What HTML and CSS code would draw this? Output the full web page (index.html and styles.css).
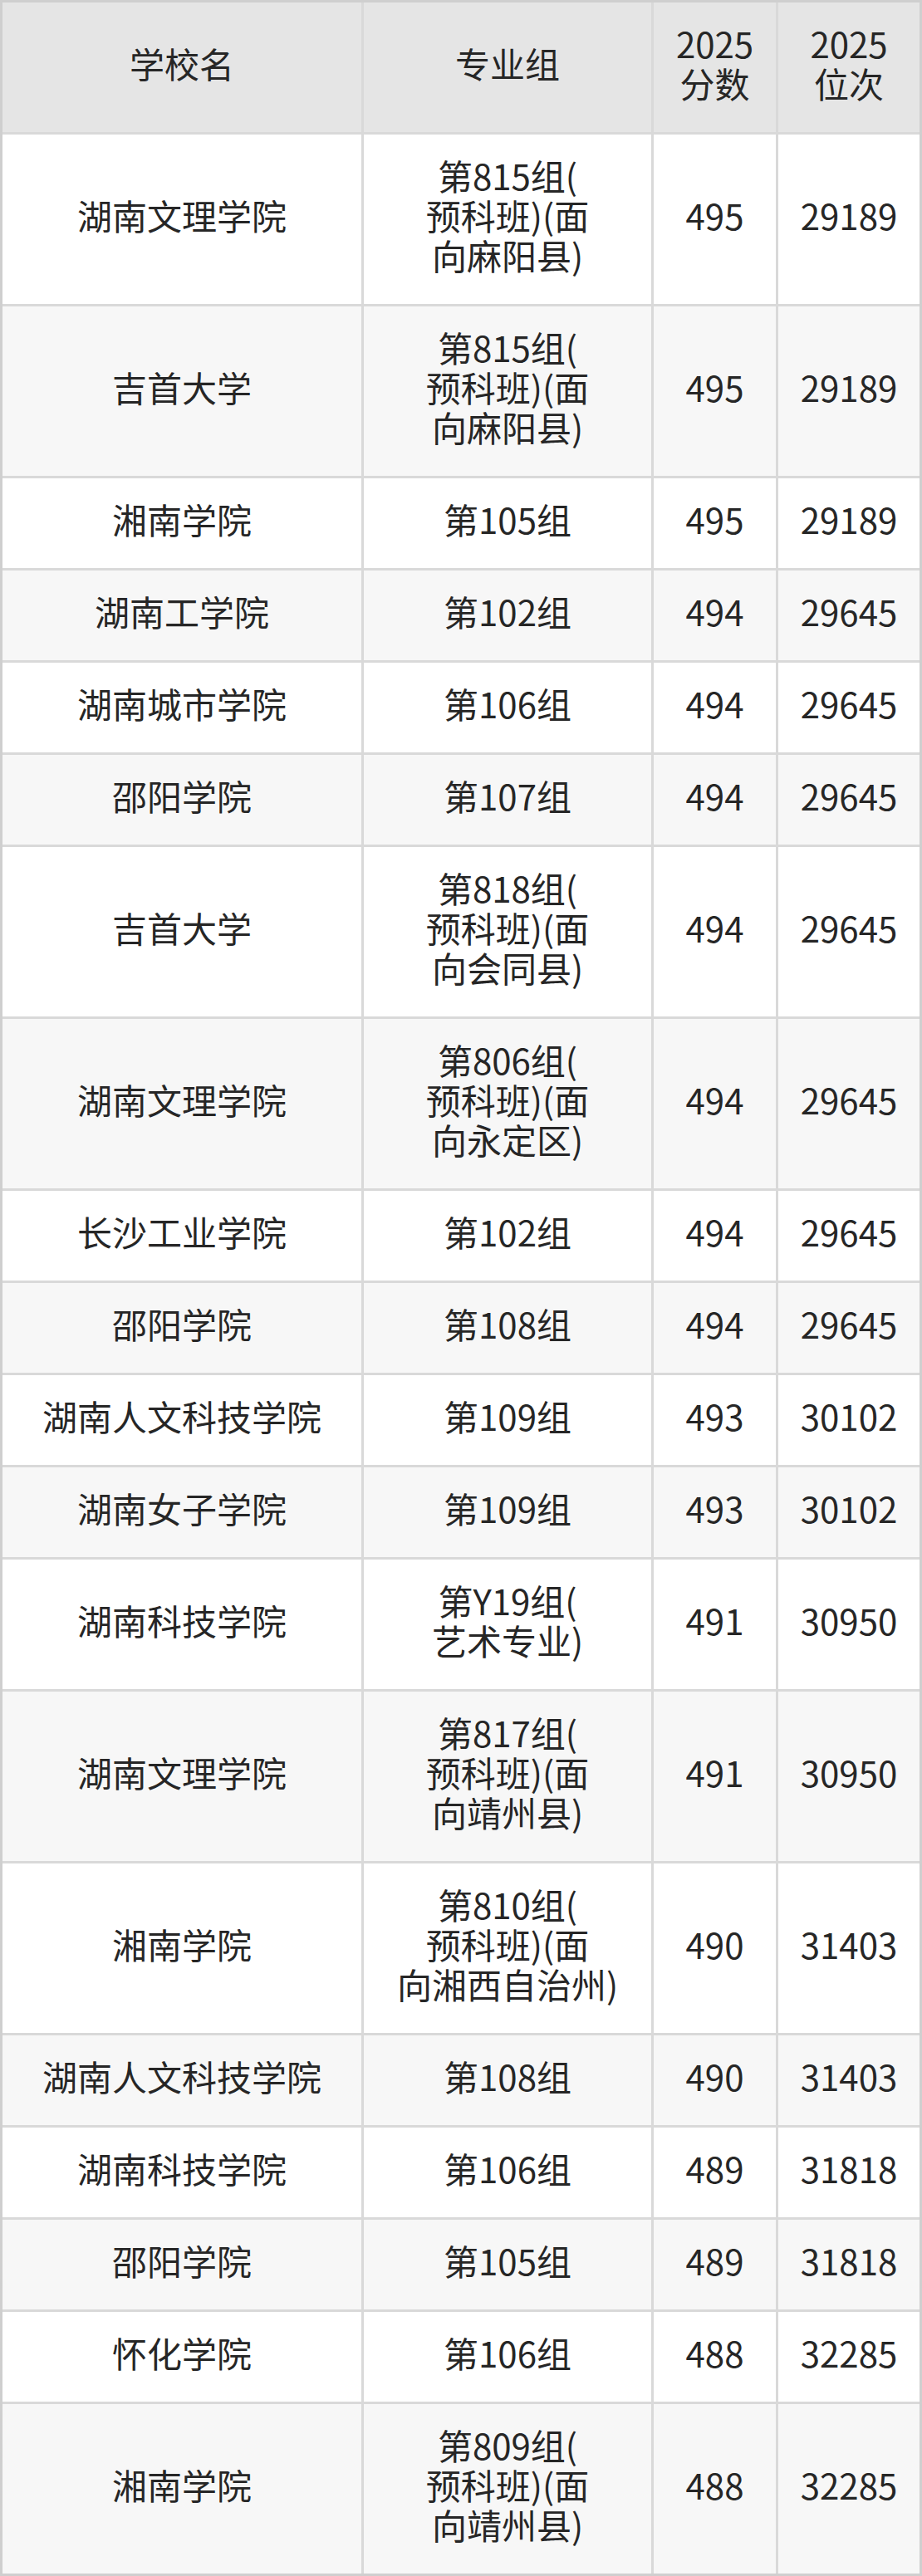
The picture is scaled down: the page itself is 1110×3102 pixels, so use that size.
FILE: index.html
```html
<!DOCTYPE html>
<html lang="zh-CN">
<head>
<meta charset="utf-8">
<title>录取分数</title>
<link rel="stylesheet" href="styles.css">
</head>
<body>
<div class="table">
  <div class="row head">
    <div class="cell">学校名</div>
    <div class="cell">专业组</div>
    <div class="cell">2025<br>分数</div>
    <div class="cell">2025<br>位次</div>
  </div>
  <div class="row">
    <div class="cell">湖南文理学院</div>
    <div class="cell">第815组(<br>预科班)(面<br>向麻阳县)</div>
    <div class="cell">495</div>
    <div class="cell">29189</div>
  </div>
  <div class="row alt">
    <div class="cell">吉首大学</div>
    <div class="cell">第815组(<br>预科班)(面<br>向麻阳县)</div>
    <div class="cell">495</div>
    <div class="cell">29189</div>
  </div>
  <div class="row">
    <div class="cell">湘南学院</div>
    <div class="cell">第105组</div>
    <div class="cell">495</div>
    <div class="cell">29189</div>
  </div>
  <div class="row alt">
    <div class="cell">湖南工学院</div>
    <div class="cell">第102组</div>
    <div class="cell">494</div>
    <div class="cell">29645</div>
  </div>
  <div class="row">
    <div class="cell">湖南城市学院</div>
    <div class="cell">第106组</div>
    <div class="cell">494</div>
    <div class="cell">29645</div>
  </div>
  <div class="row alt">
    <div class="cell">邵阳学院</div>
    <div class="cell">第107组</div>
    <div class="cell">494</div>
    <div class="cell">29645</div>
  </div>
  <div class="row">
    <div class="cell">吉首大学</div>
    <div class="cell">第818组(<br>预科班)(面<br>向会同县)</div>
    <div class="cell">494</div>
    <div class="cell">29645</div>
  </div>
  <div class="row alt">
    <div class="cell">湖南文理学院</div>
    <div class="cell">第806组(<br>预科班)(面<br>向永定区)</div>
    <div class="cell">494</div>
    <div class="cell">29645</div>
  </div>
  <div class="row">
    <div class="cell">长沙工业学院</div>
    <div class="cell">第102组</div>
    <div class="cell">494</div>
    <div class="cell">29645</div>
  </div>
  <div class="row alt">
    <div class="cell">邵阳学院</div>
    <div class="cell">第108组</div>
    <div class="cell">494</div>
    <div class="cell">29645</div>
  </div>
  <div class="row">
    <div class="cell">湖南人文科技学院</div>
    <div class="cell">第109组</div>
    <div class="cell">493</div>
    <div class="cell">30102</div>
  </div>
  <div class="row alt">
    <div class="cell">湖南女子学院</div>
    <div class="cell">第109组</div>
    <div class="cell">493</div>
    <div class="cell">30102</div>
  </div>
  <div class="row">
    <div class="cell">湖南科技学院</div>
    <div class="cell">第Y19组(<br>艺术专业)</div>
    <div class="cell">491</div>
    <div class="cell">30950</div>
  </div>
  <div class="row alt">
    <div class="cell">湖南文理学院</div>
    <div class="cell">第817组(<br>预科班)(面<br>向靖州县)</div>
    <div class="cell">491</div>
    <div class="cell">30950</div>
  </div>
  <div class="row">
    <div class="cell">湘南学院</div>
    <div class="cell">第810组(<br>预科班)(面<br>向湘西自治州)</div>
    <div class="cell">490</div>
    <div class="cell">31403</div>
  </div>
  <div class="row alt">
    <div class="cell">湖南人文科技学院</div>
    <div class="cell">第108组</div>
    <div class="cell">490</div>
    <div class="cell">31403</div>
  </div>
  <div class="row">
    <div class="cell">湖南科技学院</div>
    <div class="cell">第106组</div>
    <div class="cell">489</div>
    <div class="cell">31818</div>
  </div>
  <div class="row alt">
    <div class="cell">邵阳学院</div>
    <div class="cell">第105组</div>
    <div class="cell">489</div>
    <div class="cell">31818</div>
  </div>
  <div class="row">
    <div class="cell">怀化学院</div>
    <div class="cell">第106组</div>
    <div class="cell">488</div>
    <div class="cell">32285</div>
  </div>
  <div class="row alt">
    <div class="cell">湘南学院</div>
    <div class="cell">第809组(<br>预科班)(面<br>向靖州县)</div>
    <div class="cell">488</div>
    <div class="cell">32285</div>
  </div>
</div>
</body>
</html>
```

FILE: styles.css
```css
html, body {
  margin: 0;
  padding: 0;
  background: #ffffff;
}

.table {
  display: grid;
  grid-template-columns: 432px 346px 147px 170px;
  gap: 3px;
  width: 1104px;
  border: 3px solid #cfcfcf;
  background: #d9d9d9;
  font-family: "Noto Sans CJK SC", "Noto Sans", sans-serif;
  font-size: 42px;
  line-height: 48px;
  color: #262626;
}

.row {
  display: contents;
}

.cell {
  display: flex;
  align-items: center;
  justify-content: center;
  text-align: center;
  padding: 25px 0 35px;
  background: #ffffff;
  white-space: nowrap;
}

.row.alt .cell {
  background: #f7f7f7;
}

.row.head .cell {
  background: #e5e5e5;
}
```
